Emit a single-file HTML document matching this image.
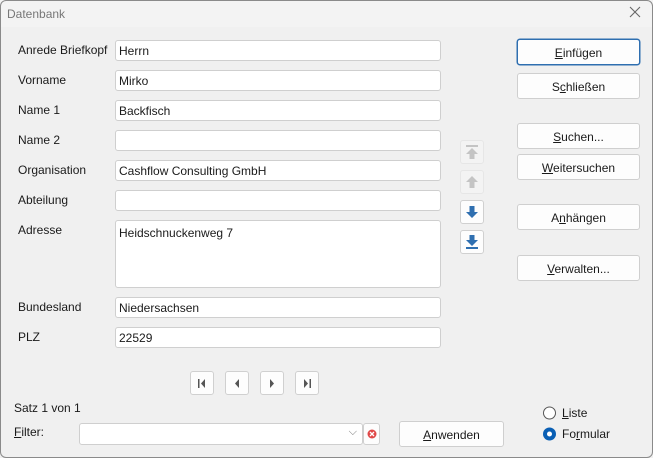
<!DOCTYPE html>
<html><head><style>
*{box-sizing:border-box;margin:0;padding:0}
body{width:653px;height:458px;background:#f0f0f0;font-family:"Liberation Sans",sans-serif;font-size:12px;color:#1a1a1a;position:relative;overflow:hidden}
.frame{position:absolute;left:0;top:0;width:653px;height:458px;border:1px solid #8a8a8a;border-radius:6px;pointer-events:none;z-index:5}
.title{position:absolute;left:0;top:0;width:100%;height:27px;background:#f3f3f3;color:#777;padding:7px 0 0 7px;font-size:12px}
.x{position:absolute;right:12px;top:6px}
.lbl{position:absolute;left:18px}
.in{position:absolute;left:115px;width:326px;height:21px;background:#fff;border:1px solid #cfcfcf;border-radius:3px;padding:3px 0 0 3px}
.btn{position:absolute;left:517px;width:123px;height:26px;background:#fdfdfd;border:1px solid #cfcfcf;border-radius:3px;text-align:center;padding-top:6px}
.sq{position:absolute;width:24px;height:24px;background:#fdfdfd;border:1px solid #d0d0d0;border-radius:3px}
.dis{background:#f3f3f3;border-color:#e6e6e6}
u{text-decoration:underline}
</style></head><body>
<div class="title">Datenbank<svg class="x" width="12" height="12"><path d="M1 1 L11 11 M11 1 L1 11" stroke="#666" stroke-width="1.1"/></svg></div>
<div class="lbl" style="top:43px">Anrede Briefkopf</div><div class="in" style="top:40px">Herrn</div>
<div class="lbl" style="top:73px">Vorname</div><div class="in" style="top:70px">Mirko</div>
<div class="lbl" style="top:103px">Name 1</div><div class="in" style="top:100px">Backfisch</div>
<div class="lbl" style="top:133px">Name 2</div><div class="in" style="top:130px"></div>
<div class="lbl" style="top:163px">Organisation</div><div class="in" style="top:160px">Cashflow Consulting GmbH</div>
<div class="lbl" style="top:193px">Abteilung</div><div class="in" style="top:190px"></div>
<div class="lbl" style="top:223px">Adresse</div><div class="in" style="top:220px;height:68px;padding-top:5px">Heidschnuckenweg 7</div>
<div class="lbl" style="top:300px">Bundesland</div><div class="in" style="top:297px">Niedersachsen</div>
<div class="lbl" style="top:330px">PLZ</div><div class="in" style="top:327px">22529</div>

<div class="sq dis" style="left:460px;top:140px"><svg width="22" height="22"><rect x="5" y="4" width="12" height="2" fill="#c4c4c4"/><path d="M11 7 L17 13 H13.5 V18 H8.5 V13 H5Z" fill="#c4c4c4"/></svg></div>
<div class="sq dis" style="left:460px;top:170px"><svg width="22" height="22"><path d="M11 5 L17 11 H13.5 V17 H8.5 V11 H5Z" fill="#c4c4c4"/></svg></div>
<div class="sq" style="left:460px;top:200px"><svg width="22" height="22"><path d="M11 17 L17 11 H13.5 V5 H8.5 V11 H5Z" fill="#2f6fb0"/></svg></div>
<div class="sq" style="left:460px;top:230px"><svg width="22" height="22"><path d="M11 15 L17 9 H13.5 V4 H8.5 V9 H5Z" fill="#2f6fb0"/><rect x="5" y="16" width="12" height="2" fill="#2f6fb0"/></svg></div>

<div class="btn" style="top:39px;border:1px solid #2f6fb0;box-shadow:0 0 0 0.5px #2f6fb0"><u>E</u>infügen</div>
<div class="btn" style="top:73px">S<u>c</u>hließen</div>
<div class="btn" style="top:123px"><u>S</u>uchen...</div>
<div class="btn" style="top:154px"><u>W</u>eitersuchen</div>
<div class="btn" style="top:204px">A<u>n</u>hängen</div>
<div class="btn" style="top:255px"><u>V</u>erwalten...</div>

<div class="sq" style="left:190px;top:371px"><svg width="22" height="22"><rect x="7" y="7" width="1.5" height="9" fill="#555"/><path d="M14 7 V16 L10 11.5Z" fill="#555"/></svg></div>
<div class="sq" style="left:225px;top:371px"><svg width="22" height="22"><path d="M13 7 V16 L9 11.5Z" fill="#555"/></svg></div>
<div class="sq" style="left:260px;top:371px"><svg width="22" height="22"><path d="M9 7 V16 L13 11.5Z" fill="#555"/></svg></div>
<div class="sq" style="left:295px;top:371px"><svg width="22" height="22"><path d="M8 7 V16 L12 11.5Z" fill="#555"/><rect x="13.5" y="7" width="1.5" height="9" fill="#555"/></svg></div>

<div class="lbl" style="left:14px;top:401px">Satz 1 von 1</div>
<div class="lbl" style="left:14px;top:425px"><u>F</u>ilter:</div>
<div style="position:absolute;left:79px;top:423px;width:284px;height:22px;background:#fff;border:1px solid #cfcfcf;border-radius:3px"><span style="position:absolute;right:5px;top:2px;color:#777;font-size:11px">⌵</span></div>
<div style="position:absolute;left:363px;top:423px;width:17px;height:22px;background:#fdfdfd;border:1px solid #d0d0d0;border-radius:3px"><svg width="15" height="20"><circle cx="8" cy="10" r="4.5" fill="#e04848"/><path d="M6 8 L10 12 M10 8 L6 12" stroke="#fff" stroke-width="1.3"/></svg></div>
<div class="btn" style="left:399px;top:421px;width:105px;height:26px"><u>A</u>nwenden</div>

<svg style="position:absolute;left:542px;top:405px" width="16" height="40"><circle cx="7.5" cy="8" r="6" fill="#fff" stroke="#555"/><circle cx="7.5" cy="29" r="6.5" fill="#0a5fb4"/><circle cx="7.5" cy="29" r="2.5" fill="#fff"/></svg>
<div class="lbl" style="left:562px;top:406px"><u>L</u>iste</div>
<div class="lbl" style="left:562px;top:427px">Fo<u>r</u>mular</div>
<div class="frame"></div>
</body></html>
